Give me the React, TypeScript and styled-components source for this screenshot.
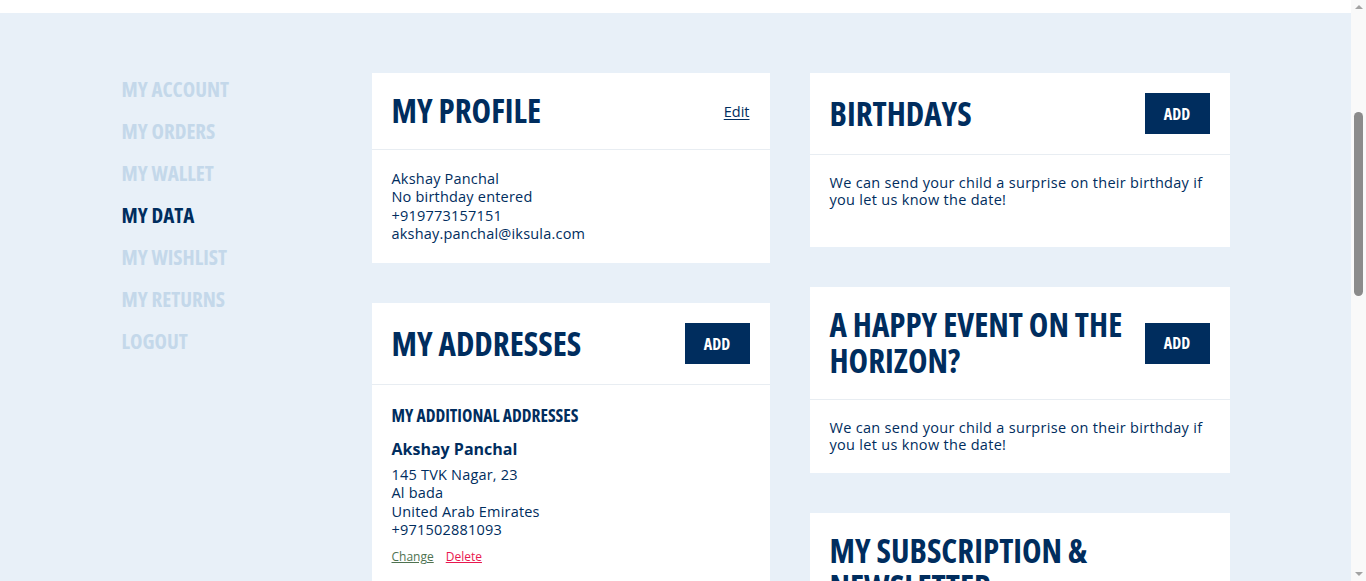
import React, { useLayoutEffect } from "react";
import styled, { createGlobalStyle } from "styled-components";

const NAVY = "#002d5e";

const GlobalStyle = createGlobalStyle`
  html, body {
    margin: 0;
    padding: 0;
    background: #e8f0f8;
  }
  body {
    font-family: "Open Sans", "Liberation Sans", sans-serif;
    color: ${NAVY};
  }
  * { box-sizing: border-box; }
`;

// Open Sans condensed width stands in for the site's tall condensed display face
const HEADING_FONT = `"Open Sans", "DejaVu Sans Condensed", sans-serif`;

const navItems = [
  { label: "MY ACCOUNT" },
  { label: "MY ORDERS" },
  { label: "MY WALLET" },
  { label: "MY DATA", active: true },
  { label: "MY WISHLIST" },
  { label: "MY RETURNS" },
  { label: "LOGOUT" },
];

const App: React.FC = () => {
  // the page is shown scrolled past the site header
  useLayoutEffect(() => {
    window.scrollTo(0, 307);
  }, []);

  return (
    <>
      <GlobalStyle />
      <SiteHeader />
      <Main>
        <Container>
          <SideNav>
            {navItems.map((item) => (
              <NavLink key={item.label} $active={!!item.active}>
                {item.label}
              </NavLink>
            ))}
          </SideNav>

          <Column>
            <Card>
              <CardHeader>
                <Title>MY PROFILE</Title>
                <EditLink href="#">Edit</EditLink>
              </CardHeader>
              <CardBody>
                <InfoText>
                  Akshay Panchal
                  <br />
                  No birthday entered
                  <br />
                  +919773157151
                  <br />
                  akshay.panchal@iksula.com
                </InfoText>
              </CardBody>
            </Card>

            <Card>
              <CardHeader>
                <Title>MY ADDRESSES</Title>
                <AddButton>ADD</AddButton>
              </CardHeader>
              <CardBody>
                <SubTitle>MY ADDITIONAL ADDRESSES</SubTitle>
                <AddressName>Akshay Panchal</AddressName>
                <InfoText>
                  145 TVK Nagar, 23
                  <br />
                  Al bada
                  <br />
                  United Arab Emirates
                  <br />
                  +971502881093
                </InfoText>
                <AddressActions>
                  <ActionLink href="#" $tone="change">Change</ActionLink>
                  <ActionLink href="#" $tone="delete">Delete</ActionLink>
                </AddressActions>
              </CardBody>
            </Card>
          </Column>

          <Column>
            <Card>
              <CardHeader>
                <Title>BIRTHDAYS</Title>
                <AddButton>ADD</AddButton>
              </CardHeader>
              <CardBody $extraBottom>
                <Blurb>
                  We can send your child a surprise on their birthday if you let
                  us know the date!
                </Blurb>
              </CardBody>
            </Card>

            <Card>
              <CardHeader>
                <Title>A HAPPY EVENT ON THE HORIZON?</Title>
                <AddButton>ADD</AddButton>
              </CardHeader>
              <CardBody>
                <Blurb>
                  We can send your child a surprise on their birthday if you let
                  us know the date!
                </Blurb>
              </CardBody>
            </Card>

            <Card>
              <CardHeader>
                <Title $maxWidth={290}>MY SUBSCRIPTION &amp; NEWSLETTER</Title>
              </CardHeader>
              <CardBody>
                <Blurb>
                  Stay up to date with our latest offers, new arrivals and
                  exclusive events.
                </Blurb>
              </CardBody>
            </Card>
          </Column>
        </Container>
      </Main>
      <ScrollTrack aria-hidden>
        <ScrollArrow $dir="up" />
        <ScrollThumb />
        <ScrollArrow $dir="down" />
      </ScrollTrack>
    </>
  );
};

const SiteHeader = styled.header`
  height: 320px;
  background: #ffffff;
`;

const Main = styled.main`
  min-height: 1430px;
  padding: 60px 15px 80px 0;
  background: #e8f0f8;
`;

const Container = styled.div`
  width: 1108px;
  margin: 0 auto;
  display: grid;
  grid-template-columns: 210px 398px 420px;
  column-gap: 40px;
  align-items: start;
`;

const SideNav = styled.nav`
  display: flex;
  flex-direction: column;
  gap: 14px;
  padding-top: 2px;
`;

const NavLink = styled.a<{ $active: boolean }>`
  font-family: ${HEADING_FONT};
  font-stretch: 75%;
  font-weight: 700;
  font-size: 21px;
  line-height: 28px;
  color: ${(p) => (p.$active ? NAVY : "#c4d8ea")};
  cursor: pointer;
`;

const Column = styled.div`
  display: flex;
  flex-direction: column;
  gap: 40px;
`;

const Card = styled.section`
  background: #ffffff;
`;

const CardHeader = styled.div`
  display: flex;
  align-items: center;
  justify-content: space-between;
  gap: 15px;
  padding: 20px;
  border-bottom: 1px solid #e8edf2;
`;

const Title = styled.h2<{ $maxWidth?: number }>`
  margin: 0;
  font-family: ${HEADING_FONT};
  font-stretch: 75%;
  font-weight: 700;
  font-size: 33px;
  line-height: 36px;
  color: ${NAVY};
  max-width: ${(p) => (p.$maxWidth ? `${p.$maxWidth}px` : "none")};
`;

const EditLink = styled.a`
  font-size: 14.5px;
  color: ${NAVY};
  text-decoration: underline;
  text-underline-offset: 2px;
`;

const AddButton = styled.button`
  flex-shrink: 0;
  width: 65px;
  height: 41px;
  border: none;
  background: ${NAVY};
  color: #ffffff;
  font-family: ${HEADING_FONT};
  font-stretch: 75%;
  font-weight: 700;
  font-size: 16px;
  cursor: pointer;
`;

const CardBody = styled.div<{ $extraBottom?: boolean }>`
  padding: 20px 20px ${(p) => (p.$extraBottom ? "39px" : "20px")};
`;

const InfoText = styled.p`
  margin: 0;
  font-size: 14.5px;
  line-height: 18.3px;
  letter-spacing: 0.2px;
  color: ${NAVY};
`;

const Blurb = styled.p`
  margin: 0;
  font-size: 14.5px;
  line-height: 16.5px;
  letter-spacing: 0.3px;
  color: ${NAVY};
`;

const SubTitle = styled.h3`
  margin: 0 0 13px;
  font-family: ${HEADING_FONT};
  font-stretch: 75%;
  font-weight: 700;
  font-size: 17.5px;
  line-height: 20px;
  color: ${NAVY};
`;

const AddressName = styled.div`
  font-size: 16px;
  font-weight: 700;
  line-height: 22px;
  margin-bottom: 6px;
  color: ${NAVY};
`;

const AddressActions = styled.div`
  display: flex;
  gap: 12px;
  margin-top: 9px;
`;

const ActionLink = styled.a<{ $tone: "change" | "delete" }>`
  font-size: 12px;
  color: ${(p) => (p.$tone === "delete" ? "#e8174f" : "#4e7250")};
  text-decoration: underline;
`;

/* browser scrollbar as it shows in the page capture */
const ScrollTrack = styled.div`
  position: fixed;
  top: 0;
  right: 0;
  bottom: 0;
  width: 15px;
  background: #f9f9f9;
  display: flex;
  flex-direction: column;
  align-items: center;
  justify-content: space-between;
  padding: 5px 0;
`;

const ScrollArrow = styled.span<{ $dir: "up" | "down" }>`
  width: 0;
  height: 0;
  border-left: 4px solid transparent;
  border-right: 4px solid transparent;
  ${(p) =>
    p.$dir === "up"
      ? "border-bottom: 4px solid #a3a3a3;"
      : "border-top: 4px solid #a3a3a3;"}
`;

const ScrollThumb = styled.span`
  position: absolute;
  top: 112px;
  left: 3px;
  width: 9px;
  height: 184px;
  border-radius: 5px;
  background: #8b8b8b;
`;

export default App;
